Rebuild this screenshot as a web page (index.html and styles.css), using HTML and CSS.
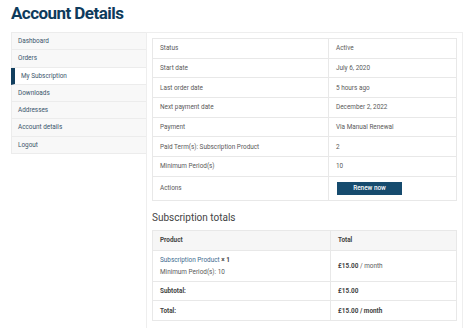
FILE: index.html
```html
<!DOCTYPE html>
<html lang="en">
<head>
  <meta charset="UTF-8">
  <meta name="viewport" content="width=device-width, initial-scale=1.0">
  <title>Account Details</title>
  <link rel="stylesheet" href="styles.css">
</head>
<body>
  <h1 class="title">Account Details</h1>

  <div class="account">
    <div class="nav">
      <div class="navItem">Dashboard</div>
      <div class="navItem">Orders</div>
      <div class="navItem navActive">My Subscription</div>
      <div class="navItem">Downloads</div>
      <div class="navItem">Addresses</div>
      <div class="navItem">Account details</div>
      <div class="navItem">Logout</div>
    </div>

    <div class="main">
      <table class="details">
        <tr><td class="label">Status</td><td>Active</td></tr>
        <tr><td class="label">Start date</td><td>July 6, 2020</td></tr>
        <tr><td class="label">Last order date</td><td>5 hours ago</td></tr>
        <tr><td class="label">Next payment date</td><td>December 2, 2022</td></tr>
        <tr><td class="label">Payment</td><td>Via Manual Renewal</td></tr>
        <tr><td class="label">Paid Term(s): Subscription Product</td><td>2</td></tr>
        <tr><td class="label">Minimum Period(s)</td><td>10</td></tr>
        <tr class="actions"><td class="label">Actions</td><td><div class="renew">Renew now</div></td></tr>
      </table>

      <h2 class="subTitle">Subscription totals</h2>

      <table class="totals">
        <tr class="head"><td class="prodCol">Product</td><td>Total</td></tr>
        <tr class="item">
          <td class="prodCol">
            <div><span class="link">Subscription Product</span> <b>× 1</b></div>
            <div class="meta">Minimum Period(s): 10</div>
          </td>
          <td><b>£15.00</b> / month</td>
        </tr>
        <tr><td class="prodCol"><b>Subtotal:</b></td><td><b>£15.00</b></td></tr>
        <tr><td class="prodCol"><b>Total:</b></td><td><b>£15.00 / month</b></td></tr>
      </table>
    </div>
  </div>
</body>
</html>
```

FILE: styles.css
```css
body {
  margin: 0;
  padding: 0 0 0 11px;
  background-color: #fff;
  font-family: Roboto, "Liberation Sans", sans-serif;
  font-size: 6.4px;
  color: #5a5a5a;
}

/* 标题 */
.title {
  margin: 0;
  height: 32px;
  font-size: 17px;
  line-height: 27px;
  font-weight: 700;
  letter-spacing: -0.55px;
  color: #0e3b5c;
}

.account {
  display: flex;
  align-items: flex-start;
}

/* 左侧菜单 */
.nav {
  width: 134px;
  border: 1px solid #ececec;
  border-bottom: none;
  background: #f8f8f8;
}
.navItem {
  height: 16.3px;
  line-height: 16.3px;
  padding-left: 6px;
  border-bottom: 1px solid #ececec;
  color: #3b566c;
}
.navActive {
  background: #fff;
  border-left: 4px solid #123f5f;
  margin-left: -1px;
  padding-left: 6px;
}

/* 右侧内容 */
.main {
  width: 305px;
  padding: 5px 5px 10px 5px;
  border: 1px solid #eeeeee;
  margin-left: -1px;
  min-height: 290px;
}

table {
  width: 100%;
  border-collapse: collapse;
  table-layout: fixed;
}
td {
  border: 1px solid #e8e8e8;
  padding: 0 7px;
  vertical-align: middle;
  text-align: left;
}

.details td {
  height: 18.7px;
}
.details .label {
  width: 161px;
}
.details .actions td {
  height: 23px;
}
.renew {
  width: 65px;
  height: 13px;
  line-height: 13px;
  background: #164b6e;
  color: #fff;
  font-weight: 500;
  text-align: center;
  margin-left: 1px;
}

.subTitle {
  margin: 0;
  height: 29px;
  line-height: 34px;
  font-size: 10px;
  font-weight: 400;
  color: #444;
}

.totals td {
  height: 18.7px;
  padding: 0 6px 0 7px;
}
.totals .prodCol {
  width: 164px;
}
.totals .head td {
  background: #f6f6f6;
  font-weight: 700;
  color: #444;
}
.totals .item td {
  height: 30px;
}
.totals b {
  color: #444;
}
.link {
  color: #3d6b8f;
}
.meta {
  margin-top: 4px;
}
```
